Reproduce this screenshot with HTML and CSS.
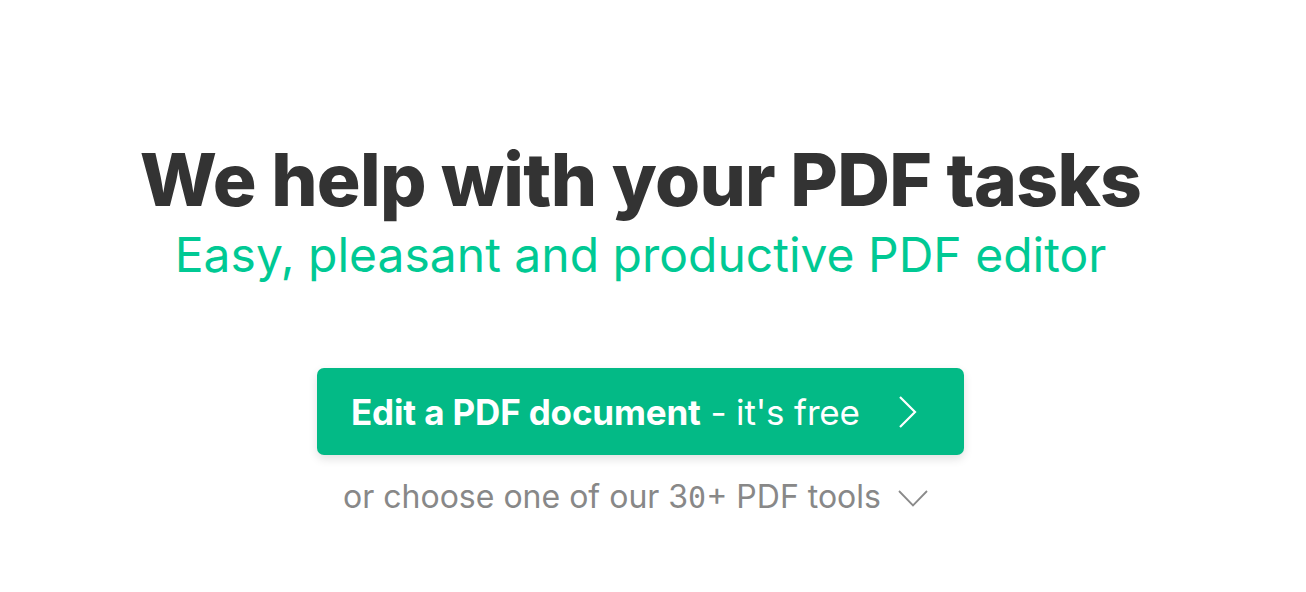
FILE: index.html
```html
<!DOCTYPE html>
<html lang="en">
<head>
    <meta charset="UTF-8">
    <meta name="viewport" content="width=device-width, initial-scale=1.0">
    <title>PDF editor</title>
    <link rel="stylesheet" href="styles.css">
</head>
<body>
    <div class="main">
        <section class="hero">
            <h1 class="title">We help with your PDF tasks</h1>
            <p class="subtitle">Easy, pleasant and productive PDF editor</p>

            <a href="#" class="edit-btn">
                <span class="edit-label"><b>Edit a PDF document</b> - it's free</span>
                <svg class="edit-arrow" width="20" height="32" viewBox="0 0 20 32">
                    <polyline points="2,1 17,16 2,31" fill="none" stroke="#ffffff" stroke-width="2.2"/>
                </svg>
            </a>

            <a href="#" class="tools-link">
                <span>or choose one of our 3<span class="zero">0</span>+ PDF tools</span>
                <svg class="tools-arrow" width="30" height="17" viewBox="0 0 30 17">
                    <polyline points="1,1 15,15.5 29,1" fill="none" stroke="#8a8a8a" stroke-width="1.8"/>
                </svg>
            </a>
        </section>
    </div>
</body>
</html>
```

FILE: styles.css
```css
* {
    margin: 0;
    padding: 0;
    box-sizing: border-box;
}

body {
    background: #ffffff;
    font-family: 'Inter', 'Liberation Sans', sans-serif;
    width: 1281px;
    min-height: 592px;
}

.main {
    display: flex;
    justify-content: center;
}

.hero {
    display: flex;
    flex-direction: column;
    align-items: center;
    padding-top: 136px;
}

.title {
    color: #333333;
    font-size: 73px;
    font-weight: 800;
    letter-spacing: -0.7px;
    line-height: 88px;
}

.subtitle {
    color: #00c994;
    font-size: 48px;
    font-weight: 400;
    line-height: 56px;
    margin-top: 3px;
}

.edit-btn {
    display: flex;
    align-items: center;
    justify-content: space-between;
    width: 647px;
    height: 87px;
    margin-top: 85px;
    padding: 0 46px 0 34px;
    background: #03ba86;
    border-radius: 7px;
    box-shadow: 0 4px 10px rgba(0, 0, 0, 0.12);
    color: #ffffff;
    text-decoration: none;
}

.edit-label {
    font-size: 35px;
    font-weight: 400;
    letter-spacing: -0.15px;
}

.edit-label b {
    font-weight: 700;
}

.tools-link {
    display: flex;
    align-items: center;
    gap: 17px;
    margin-top: 22px;
    margin-right: 10px;
    color: #888888;
    font-size: 32px;
    letter-spacing: 0;
    text-decoration: none;
}

.zero {
    font-family: 'DejaVu Sans Mono', monospace;
    font-size: 30px;
}

.tools-arrow {
    margin-top: 4px;
}
```
